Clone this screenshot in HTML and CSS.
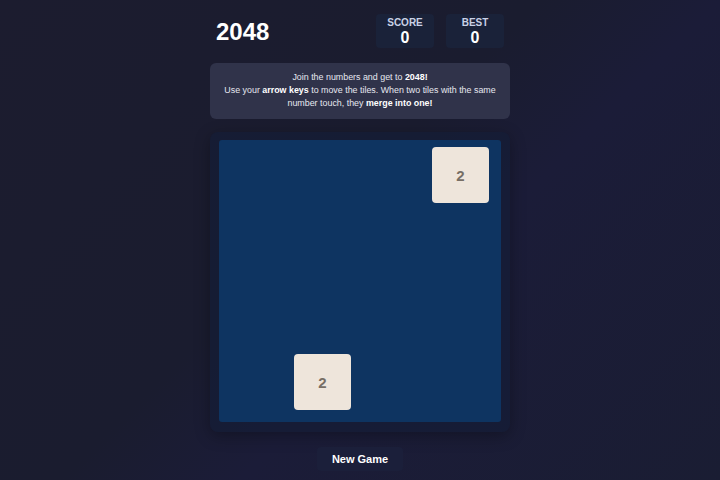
FILE: index.html
```html
<!DOCTYPE html>
<html>
<head>
<meta charset="utf-8">
<link rel="stylesheet" href="styles.css">
</head>
<body>
<div class="container">
  <div class="header">
    <h1 class="title">2048</h1>
    <div class="scores">
      <div class="score-box"><div class="label">SCORE</div><div class="value">0</div></div>
      <div class="score-box"><div class="label">BEST</div><div class="value">0</div></div>
    </div>
  </div>
  <div class="info">
    Join the numbers and get to <b>2048!</b><br>
    Use your <b>arrow keys</b> to move the tiles. When two tiles with the same number touch, they <b>merge into one!</b>
  </div>
  <div class="board-wrap">
    <div class="board">
      <div class="tile t1">2</div>
      <div class="tile t2">2</div>
    </div>
  </div>
  <div class="actions">
    <button class="new-game">New Game</button>
  </div>
</div>
</body>
</html>
```
FILE: styles.css
```css
html, body {
  margin: 0;
  height: 100%;
}
body {
  background: linear-gradient(135deg, #1c1c2f 0%, #1a1c2f 45%, #1b1c38 60%, #1a1d33 100%);
  font-family: "Liberation Sans", Arial, sans-serif;
  color: #fff;
}
.container {
  width: 300px;
  margin: 0 auto;
  padding-top: 14px;
}
.header {
  display: flex;
  justify-content: space-between;
  align-items: flex-start;
  padding: 0 6px;
  height: 34px;
}
.title {
  margin: 5px 0 0 0;
  font-size: 24px;
  font-weight: bold;
  line-height: 26px;
}
.scores {
  display: flex;
  gap: 12px;
}
.score-box {
  width: 58px;
  height: 34px;
  background: #1a2239;
  border-radius: 4px;
  text-align: center;
  box-sizing: border-box;
  padding-top: 3px;
}
.label {
  font-size: 10px;
  font-weight: bold;
  color: #c9d1e6;
  line-height: 12px;
}
.value {
  font-size: 16px;
  font-weight: bold;
  line-height: 17px;
}
.info {
  margin-top: 15px;
  background: #30334a;
  border-radius: 6px;
  padding: 8px 10px 7px;
  font-size: 8.9px;
  line-height: 13px;
  text-align: center;
  color: #e6e8f0;
  height: 41px;
}
.info b { color: #fff; }
.board-wrap {
  margin-top: 13px;
  padding: 8px 9px 10px 9px;
  background: rgba(20, 28, 54, 0.7);
  border-radius: 8px;
  box-shadow: 0 4px 16px rgba(0,0,0,0.3);
}
.board {
  position: relative;
  width: 282px;
  height: 282px;
  background: #0e3461;
  border-radius: 3px;
}
.tile {
  position: absolute;
  width: 57px;
  height: 56px;
  background: #eee5db;
  border-radius: 4px;
  color: #776e65;
  font-size: 15px;
  font-weight: bold;
  display: flex;
  align-items: center;
  justify-content: center;
}
.t1 { left: 213px; top: 7px; }
.t2 { left: 75px; top: 214px; }
.actions {
  display: flex;
  justify-content: center;
  margin-top: 15px;
}
.new-game {
  font-family: "Liberation Sans", Arial, sans-serif;
  font-size: 11px;
  font-weight: bold;
  color: #fff;
  background: #1b1f3a;
  border: none;
  border-radius: 4px;
  padding: 0 15px;
  height: 24px;
}
```
